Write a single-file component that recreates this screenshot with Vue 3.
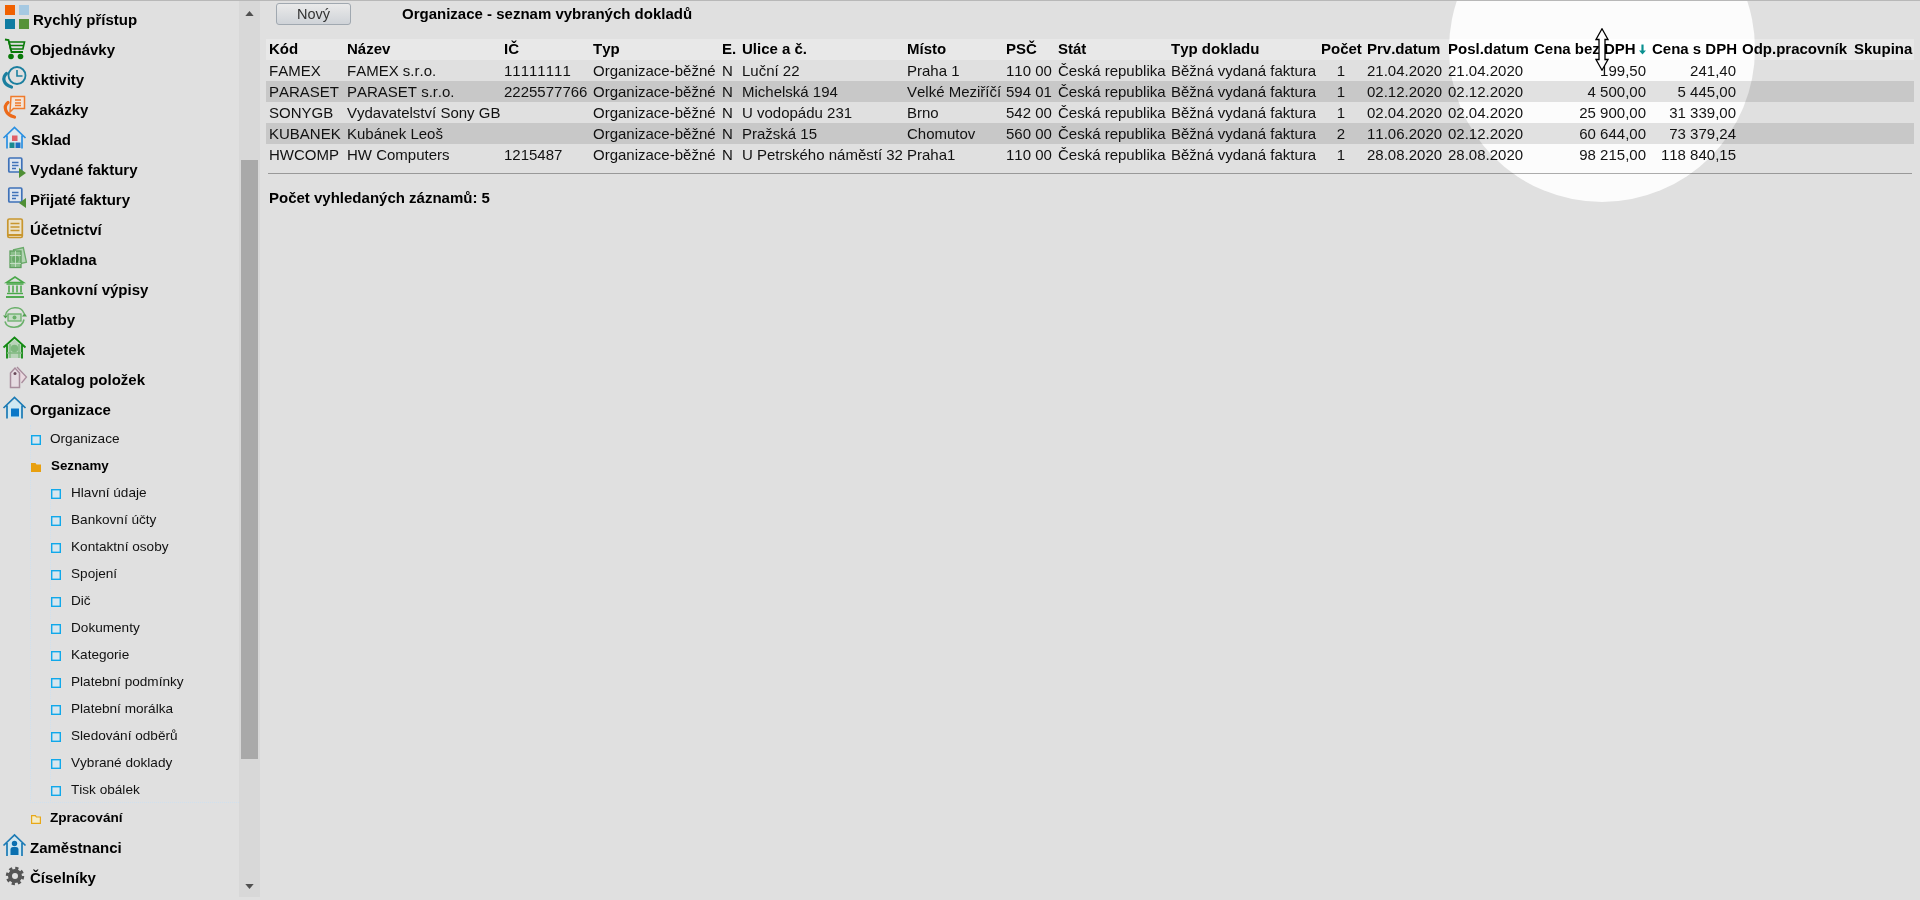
<script setup>
const cols = ['Kód','Název','IČ','Typ','E.','Ulice a č.','Místo','PSČ','Stát','Typ dokladu','Počet','Prv.datum','Posl.datum','Cena bez DPH','Cena s DPH','Odp.pracovník','Skupina']
const rows = [
  ['FAMEX','FAMEX s.r.o.','11111111','Organizace-běžné','N','Luční 22','Praha 1','110 00','Česká republika','Běžná vydaná faktura','1','21.04.2020','21.04.2020','199,50','241,40','',''],
  ['PARASET','PARASET s.r.o.','2225577766','Organizace-běžné','N','Michelská 194','Velké Meziříčí','594 01','Česká republika','Běžná vydaná faktura','1','02.12.2020','02.12.2020','4 500,00','5 445,00','',''],
  ['SONYGB','Vydavatelství Sony GB','','Organizace-běžné','N','U vodopádu 231','Brno','542 00','Česká republika','Běžná vydaná faktura','1','02.04.2020','02.04.2020','25 900,00','31 339,00','',''],
  ['KUBANEK','Kubánek Leoš','','Organizace-běžné','N','Pražská 15','Chomutov','560 00','Česká republika','Běžná vydaná faktura','2','11.06.2020','02.12.2020','60 644,00','73 379,24','',''],
  ['HWCOMP','HW Computers','1215487','Organizace-běžné','N','U Petrského náměstí 32','Praha1','110 00','Česká republika','Běžná vydaná faktura','1','28.08.2020','28.08.2020','98 215,00','118 840,15','','']
]
const lists = ['Hlavní údaje','Bankovní účty','Kontaktní osoby','Spojení','Dič','Dokumenty','Kategorie','Platební podmínky','Platební morálka','Sledování odběrů','Vybrané doklady','Tisk obálek']
const cellClass = (i) => ({ center: i === 10, right: i === 13 || i === 14 })
</script>

<template>
  <div class="app">
    <aside class="side">
      <nav class="nav">
        <div class="item l3">
          <svg viewBox="0 0 30 30"><rect x="5" y="1" width="10" height="10" fill="#f06000"/><rect x="19" y="1" width="10" height="10" fill="#a6c9e2"/><rect x="5" y="15" width="10" height="10" fill="#0f7ca2"/><rect x="19" y="15" width="10" height="10" fill="#56923a"/></svg>
          <span>Rychlý přístup</span>
        </div>
        <div class="item">
          <svg viewBox="0 0 30 30"><path d="M5 5.500l3.500.6L11.500 18H23" fill="none" stroke="#0a7a0a" stroke-width="1.800"/><path d="M9 8h15.500l-1.600 7H10.500zM9.500 11.500h14.500" fill="none" stroke="#0a7a0a" stroke-width="1.600"/><circle cx="11" cy="22.500" r="2.800" fill="#0a7a0a"/><circle cx="20.500" cy="22.500" r="2.800" fill="#0a7a0a"/></svg>
          <span>Objednávky</span>
        </div>
        <div class="item">
          <svg viewBox="0 0 30 30"><circle cx="17" cy="11.500" r="8.500" fill="none" stroke="#1b7f9f" stroke-width="1.800"/><path d="M17 6V12H22.500" fill="none" stroke="#1b7f9f" stroke-width="1.600"/><path d="M6.500 9.500C2 13.500 3 20.500 11.500 23" fill="none" stroke="#1b7f9f" stroke-width="3.200" stroke-linecap="round"/></svg>
          <span>Aktivity</span>
        </div>
        <div class="item">
          <svg viewBox="0 0 30 30"><path d="M11 2.500h13.500v12H13.500L10 18z" fill="#f3e4d8" stroke="#f07a2a" stroke-width="1.500"/><path d="M15 6h6M15 9h6M15 11.500h6" stroke="#f07a2a" stroke-width="1.300"/><path d="M8 8.500C3 12.500 5 20.500 14.500 23" fill="none" stroke="#ec6a1a" stroke-width="3.200" stroke-linecap="round"/></svg>
          <span>Zakázky</span>
        </div>
        <div class="item l1">
          <svg viewBox="0 0 30 30"><path d="M7 12V23.500H22V12L14.500 5z" fill="#dfe9f0"/><path d="M3.500 14L14.500 3.500 25.500 14M7 11.500V24.500M22 11.500V24.500" fill="none" stroke="#2a90e2" stroke-width="1.700"/><rect x="12" y="11.500" width="5.500" height="5.500" fill="#e06068"/><rect x="9.500" y="18.500" width="5" height="5.500" fill="#1a8a90"/><rect x="15.500" y="18.500" width="5" height="5.500" fill="#2070c0"/></svg>
          <span>Sklad</span>
        </div>
        <div class="item">
          <svg viewBox="0 0 30 30"><rect x="8.800" y="4" width="13" height="14" rx="1" fill="#dfe7f0" stroke="#3f72b8" stroke-width="1.700"/><path d="M12 8.500h6.500M12 11.500h6.500M12 14.500h4" stroke="#3f72b8" stroke-width="1.300"/><path d="M19 14l7 5-7 5z" fill="#4f8f35"/></svg>
          <span>Vydané faktury</span>
        </div>
        <div class="item">
          <svg viewBox="0 0 30 30"><rect x="8.800" y="4" width="13" height="14" rx="1" fill="#dfe7f0" stroke="#3f72b8" stroke-width="1.700"/><path d="M12 8.500h6.500M12 11.500h6.500M12 14.500h4" stroke="#3f72b8" stroke-width="1.300"/><path d="M26 14v10l-7-5z" fill="#4f8f35"/></svg>
          <span>Přijaté faktury</span>
        </div>
        <div class="item">
          <svg viewBox="0 0 30 30"><rect x="7.800" y="5" width="14.500" height="18.500" rx="1.500" fill="#ece2c8" stroke="#c8962e" stroke-width="1.700"/><path d="M10.500 9.500h9M10.500 13h9M10.500 16.500h9" stroke="#c8962e" stroke-width="1.400"/><path d="M8 21h14" stroke="#c8962e" stroke-width="2"/></svg>
          <span>Účetnictví</span>
        </div>
        <div class="item">
          <svg viewBox="0 0 30 30"><rect x="15" y="4.500" width="10" height="15" transform="rotate(-12 20 12)" fill="#b4d4b4" stroke="#6aaa6a" stroke-width="1.300"/><rect x="10" y="7" width="11" height="16.500" fill="#8cc08c" stroke="#5fa05f" stroke-width="1.300"/><circle cx="15.500" cy="15" r="3.600" fill="#6aaa6a"/><path d="M10 11.500h11M10 19.500h11M15.500 7v16" stroke="#d8e8d8" stroke-width=".7"/></svg>
          <span>Pokladna</span>
        </div>
        <div class="item">
          <svg viewBox="0 0 30 30"><path d="M15 3L6.500 8.500h17z" fill="none" stroke="#4aa84a" stroke-width="1.500"/><path d="M6.500 10h17M9 11.500v7M13 11.500v7M17 11.500v7M21 11.500v7" stroke="#4aa84a" stroke-width="1.500"/><path d="M7 19.500h16" stroke="#4aa84a" stroke-width="1.400"/><path d="M6 23h18" stroke="#4aa84a" stroke-width="1.900"/></svg>
          <span>Bankovní výpisy</span>
        </div>
        <div class="item">
          <svg viewBox="0 0 30 30"><path d="M5.500 11.500C7 1.500 22 1.500 24 9.500M24 15.500C22 25.500 7 25.500 5 17.500" fill="none" stroke="#6ab06a" stroke-width="1.600"/><path d="M3 11.500h5l-2.500 3zM22 12.500h5l-2.500-3.500z" fill="#4f9f4f"/><rect x="8" y="10" width="13" height="7" fill="#c4dcc4" stroke="#6ab06a" stroke-width="1.300"/><circle cx="14.500" cy="13.500" r="2" fill="#6ab06a"/></svg>
          <span>Platby</span>
        </div>
        <div class="item">
          <svg viewBox="0 0 30 30"><path d="M7 12.500V24H22V12.500L14.500 5.500z" fill="#b8d4b8"/><path d="M3.500 13.500L14.500 3.500 25.500 13.500M7 11V24.500M22 11V24.500" fill="none" stroke="#128a12" stroke-width="1.800"/><circle cx="14.500" cy="14.500" r="3.800" fill="#7eb87e"/><path d="M10 10v14M19 10v14M7 19h15" stroke="#7eb87e" stroke-width="1.300"/></svg>
          <span>Majetek</span>
        </div>
        <div class="item">
          <svg viewBox="0 0 30 30"><path d="M17 3l9.500 10-5 6" fill="#ead9e0" stroke="#a88c9c" stroke-width="1.300"/><path d="M10.500 9L15 4l4.500 5V23.500h-9z" fill="#e6dce2" stroke="#a88c9c" stroke-width="1.500"/><circle cx="15" cy="9.500" r="1.500" fill="#6a4a5a"/></svg>
          <span>Katalog položek</span>
        </div>
        <div class="item">
          <svg viewBox="0 0 30 30"><path d="M7 12.500V24H22V12.500L14.500 5.500z" fill="#cfe8f2"/><path d="M3.500 14L14.500 3.500 25.500 14M7 11.500V24.500M22 11.500V24.500" fill="none" stroke="#1a7ab5" stroke-width="1.700"/><rect x="11" y="14.500" width="8" height="8" fill="#0a78c8"/></svg>
          <span>Organizace</span>
        </div>

        <div class="tree">
          <div class="sub">
            <svg class="leaf" viewBox="0 0 10 10"><rect x=".7" y=".7" width="8.600" height="8.600" fill="#d8e6ee" stroke="#10a8ea" stroke-width="1.400"/></svg>
            <span>Organizace</span>
          </div>
          <div class="sub open">
            <svg class="leaf" viewBox="0 0 10 10"><path d="M0 1h4.500l1 1.500H10V10H0z" fill="#e8a010"/></svg>
            <span>Seznamy</span>
          </div>
          <div class="tree3">
            <div v-for="name in lists" :key="name" class="sub">
              <svg class="leaf" viewBox="0 0 10 10"><rect x=".7" y=".7" width="8.600" height="8.600" fill="#d8e6ee" stroke="#10a8ea" stroke-width="1.400"/></svg>
              <span>{{ name }}</span>
            </div>
          </div>
        </div>
        <div class="sub closed">
          <svg class="leaf" viewBox="0 0 10 10"><path d="M.6 1.600h3.800l1 1.400h4V9.400H.6z" fill="#f4ecc8" stroke="#e8a818" stroke-width="1.200"/></svg>
          <span>Zpracování</span>
        </div>

        <div class="item">
          <svg viewBox="0 0 30 30"><path d="M7 12V23.500H22V12L14.500 5z" fill="#cfe8f2"/><path d="M3.500 13.500L14.500 3 25.500 13.500M7 11V24M22 11V24" fill="none" stroke="#1a7ab5" stroke-width="1.700"/><circle cx="14.500" cy="11.500" r="2.700" fill="#0a70b0"/><path d="M10.500 23v-5.500q0-2.500 2.500-2.500h3q2.500 0 2.500 2.500V23z" fill="#0a70b0"/></svg>
          <span>Zaměstnanci</span>
        </div>
        <div class="item">
          <svg viewBox="0 0 30 30"><circle cx="15" cy="14" r="5" fill="none" stroke="#555" stroke-width="4"/><circle cx="15" cy="14" r="7.800" fill="none" stroke="#555" stroke-width="2.800" stroke-dasharray="3.200 2.925"/></svg>
          <span>Číselníky</span>
        </div>
      </nav>
      <div class="scroll">
        <svg class="arrow up" viewBox="0 0 10 6"><path d="M0 6L5 0l5 6z" fill="#505050"/></svg>
        <div class="thumb"></div>
        <svg class="arrow down" viewBox="0 0 10 6"><path d="M0 0h10L5 6z" fill="#505050"/></svg>
      </div>
    </aside>

    <main class="main">
      <div class="bar">
        <button class="btn" type="button">Nový</button>
        <h1 class="title">Organizace - seznam vybraných dokladů</h1>
      </div>
      <div class="table">
        <div class="row head">
          <div v-for="(c, i) in cols" :key="c" class="cell">
            {{ c }}<svg v-if="i === 13" class="sort" viewBox="0 0 7 10"><path d="M2.400 0h2.200v6H7L3.500 10 0 6h2.400z" fill="#0a8080"/></svg>
          </div>
        </div>
        <div v-for="r in rows" :key="r[0]" class="row body">
          <div v-for="(v, i) in r" :key="i" class="cell" :class="cellClass(i)">{{ v }}</div>
        </div>
      </div>
      <hr class="rule">
      <p class="count">Počet vyhledaných záznamů: 5</p>
    </main>

    <div class="spot"></div>
    <svg class="cursor" viewBox="0 0 14 43"><path d="M7 .8L13 11.500H10V31.500H13L7 42.200 1 31.500H4V11.500H1z" fill="#fff" stroke="#000" stroke-width="1.300" stroke-linejoin="miter"/></svg>
  </div>
</template>

<style>
html, body { margin: 0; background: #e0e0e0; }
</style>

<style scoped>
.app {
  position: relative;
  display: flex;
  width: 1920px;
  height: 900px;
  box-sizing: border-box;
  border-top: 1px solid #b8b8b8;
  overflow: hidden;
  background: #e0e0e0;
  color: #000;
  font-family: "Liberation Sans", Arial, sans-serif;
  font-kerning: none;
}
.side { display: flex; width: 260px; flex: none; height: 896px; }
.nav { width: 239px; flex: none; padding-top: 3px; overflow: hidden; }
.item {
  display: flex;
  align-items: center;
  height: 30px;
  font-size: 15px;
  font-weight: 700;
  white-space: nowrap;
}
.item svg { width: 30px; height: 30px; flex: none; }
.item.l3 span { margin-left: 3px; }
.item.l1 span { margin-left: 1px; }
.tree { margin: 1px 0 0 30px; border-left: 1px dotted #cfe0ee; border-bottom: 1px dotted #cfe0ee; height: 378px; box-sizing: border-box; }
.tree3 { margin-left: 19px; border-left: 1px dotted #cfe0ee; }
.sub {
  display: flex;
  align-items: center;
  height: 27px;
  font-size: 13.6px;
  color: #111;
  white-space: nowrap;
}
.leaf { width: 10px; height: 10px; flex: none; margin: 3px 9px 0 0; }
.tree3 .leaf { margin-right: 10px; }
.open { font-weight: 700; font-size: 13.33px; color: #000; }
.open .leaf { margin-right: 10px; }
.closed { font-weight: 700; margin: 0 0 0 31px; height: 29px; color: #000; }
.scroll {
  position: relative;
  width: 21px;
  flex: none;
  background: #d8d8d8;
  padding-top: 159px;
  box-sizing: border-box;
}
.thumb { width: 17px; height: 599px; margin-left: 2px; background: #a9a9a9; }
.arrow { position: absolute; left: 6px; width: 9px; height: 5px; }
.up { top: 10px; }
.down { bottom: 8px; }

.main { flex: 1; min-width: 0; padding-left: 6px; font-size: 15px; }
.bar { display: flex; align-items: center; height: 25px; padding: 1px 0 0 10px; margin-bottom: 13px; box-sizing: border-box; }
.btn {
  width: 75px;
  height: 22px;
  padding: 0;
  border: 1px solid #a0a8b0;
  border-radius: 3px;
  background: linear-gradient(#eaeaea, #cfd3d8);
  color: #333;
  font: 14.5px "Liberation Sans", Arial, sans-serif;
}
.title { margin: 0 0 2px 51px; font-size: 15px; font-weight: 700; }
.table { width: 1648px; }
.row {
  display: grid;
  grid-template-columns: 78px 157px 89px 129px 20px 165px 99px 52px 113px 150px 46px 81px 86px 118px 90px 112px 63px;
  height: 21px;
  line-height: 21px;
  white-space: nowrap;
}
.head { font-weight: 700; background: #e8e8e8; line-height: 20px; }
.body { color: #111; }
.body:nth-child(odd) { background: #c8c8c8; }
.cell { padding: 0 3px; min-width: 0; }
.center { text-align: center; }
.right { text-align: right; }
.sort { width: 7px; height: 11px; margin-left: 3px; vertical-align: -1px; }
.rule { width: 1644px; margin: 8px 0 0 2px; border: 0; border-top: 1px solid #999; height: 1px; }
.count { margin: 14px 0 0 3px; font-size: 15px; font-weight: 700; line-height: 18px; }

.spot {
  position: absolute;
  left: 1449px;
  top: -105px;
  width: 306px;
  height: 306px;
  border-radius: 50%;
  background: #1c1c1c;
  mix-blend-mode: color-dodge;
  pointer-events: none;
}
.cursor { position: absolute; left: 1595px; top: 27px; width: 14px; height: 43px; pointer-events: none; }
</style>
